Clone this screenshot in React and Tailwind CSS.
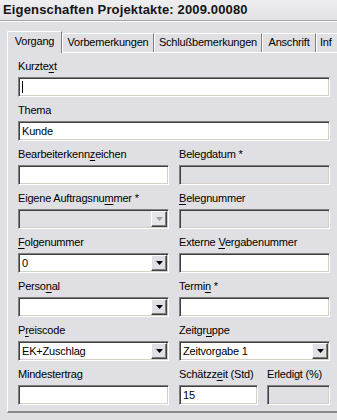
import React from "react";

function U({ children }) {
  return <span className="underline decoration-1 underline-offset-[2px]">{children}</span>;
}

function Label({ children }) {
  return (
    <div className="h-[13px] leading-[13px] text-[11px] tracking-[-0.2px] text-black whitespace-nowrap">
      {children}
    </div>
  );
}

function Field({ value, disabled, caret }) {
  return (
    <div
      className={`mt-[4px] h-[20px] border border-t-[#808080] border-l-[#808080] border-b-white border-r-white shadow-[inset_1px_1px_0_#404040,inset_-1px_-1px_0_#d4d0c8] ${
        disabled ? "bg-[#e0dfe3]" : "bg-white"
      } flex items-center pl-[3px] text-[11px] tracking-[-0.2px] text-black whitespace-nowrap`}
    >
      {caret && <span className="w-px h-[12px] bg-black" />}
      {value}
    </div>
  );
}

function Arrow({ disabled }) {
  return (
    <svg width="7" height="4" viewBox="0 0 7 4">
      <polygon points="0,0 7,0 3.5,4" fill={disabled ? "#a0a0a0" : "#000"} />
    </svg>
  );
}

function Combo({ value, disabled }) {
  return (
    <div
      className={`mt-[4px] h-[20px] border border-t-[#808080] border-l-[#808080] border-b-white border-r-white shadow-[inset_1px_1px_0_#404040,inset_-1px_-1px_0_#d4d0c8] ${
        disabled ? "bg-[#e0dfe3]" : "bg-white"
      } flex items-center p-[1px] text-[11px] tracking-[-0.2px] text-black whitespace-nowrap`}
    >
      <div className="flex-1 pl-[2px] overflow-hidden">{value}</div>
      <div
        className={`w-[16px] h-[16px] flex items-center justify-center border border-t-white border-l-white border-b-[#404040] border-r-[#404040] shadow-[inset_-1px_-1px_0_#808080] ${
          disabled ? "bg-[#e6e5e9]" : "bg-[#e0dfe3]"
        }`}
      >
        <Arrow disabled={disabled} />
      </div>
    </div>
  );
}

function Tab({ children, active, w }) {
  if (active) {
    return (
      <div
        className={`${w} relative z-10 -mb-px h-[22px] bg-[#e0dfe3] border-l border-t border-l-white border-t-white border-r border-r-[#808080] rounded-tl-[2px] flex items-start justify-center pt-[3px] text-[11px] tracking-[-0.2px] leading-[13px]`}
      >
        {children}
      </div>
    );
  }
  return (
    <div
      className={`${w} h-[19px] bg-[#e0dfe3] border-l border-t border-l-white border-t-white border-r border-r-[#808080] rounded-tl-[2px] flex items-start justify-center pt-[2px] text-[11px] tracking-[-0.2px] leading-[13px] whitespace-nowrap`}
    >
      {children}
    </div>
  );
}

export default function App() {
  return (
    <div className="w-[337px] h-[420px] overflow-hidden bg-[#e0dfe3] font-['Liberation_Sans',Arial,sans-serif] text-black">
      <div className="h-[21px] bg-gradient-to-b from-[#eeeef0] to-[#e2e2e6] border-b border-b-[#a4a4ac] pl-[3px] flex items-center">
        <span className="text-[13px] font-bold tracking-[0.15px] text-[#141414] leading-[16px]">
          Eigenschaften Projektakte: 2009.00080
        </span>
      </div>
      <div className="h-px bg-white" />

      <div className="mt-[9px] pl-[7px] flex items-end h-[21px] w-[400px]">
        <Tab active w="w-[55px]">Vorgang</Tab>
        <Tab w="w-[92px]">Vorbemerkungen</Tab>
        <Tab w="w-[108px]">Schlußbemerkungen</Tab>
        <Tab w="w-[54px]">Anschrift</Tab>
        <Tab w="w-[60px] justify-start pl-[3px]">Inf</Tab>
      </div>

      <div className="ml-[7px] w-[360px] border-l border-t border-l-white border-t-white border-b-2 border-b-[#888888] pt-[7px] pl-[10px] pb-[6px]">
        <div className="grid grid-cols-[151px_151px] gap-x-[10px] gap-y-[7px]">
          <div className="col-span-2">
            <Label>
              Kurzte<U>x</U>t
            </Label>
            <Field caret />
          </div>
          <div className="col-span-2">
            <Label>Thema</Label>
            <Field value="Kunde" />
          </div>

          <div>
            <Label>
              Bearbeiterkenn<U>z</U>eichen
            </Label>
            <Field />
          </div>
          <div>
            <Label>Belegdatum *</Label>
            <Field disabled />
          </div>

          <div>
            <Label>
              Eigene Auftragsnu<U>m</U>mer *
            </Label>
            <Combo disabled />
          </div>
          <div>
            <Label>
              <U>B</U>elegnummer
            </Label>
            <Field disabled />
          </div>

          <div>
            <Label>
              <U>F</U>olgenummer
            </Label>
            <Combo value="0" />
          </div>
          <div>
            <Label>
              Externe <U>V</U>ergabenummer
            </Label>
            <Field />
          </div>

          <div>
            <Label>
              Perso<U>n</U>al
            </Label>
            <Combo />
          </div>
          <div>
            <Label>
              Termi<U>n</U> *
            </Label>
            <Field />
          </div>

          <div>
            <Label>
              P<U>r</U>eiscode
            </Label>
            <Combo value="EK+Zuschlag" />
          </div>
          <div>
            <Label>
              Zeitgr<U>u</U>ppe
            </Label>
            <Combo value="Zeitvorgabe 1" />
          </div>

          <div>
            <Label>Mindestertrag</Label>
            <Field />
          </div>
          <div className="flex gap-[9px]">
            <div className="w-[79px]">
              <Label>
                Schätzz<U>e</U>it (Std)
              </Label>
              <Field value="15" />
            </div>
            <div className="w-[63px]">
              <Label>Erledigt (%)</Label>
              <Field disabled />
            </div>
          </div>
        </div>
      </div>
    </div>
  );
}
